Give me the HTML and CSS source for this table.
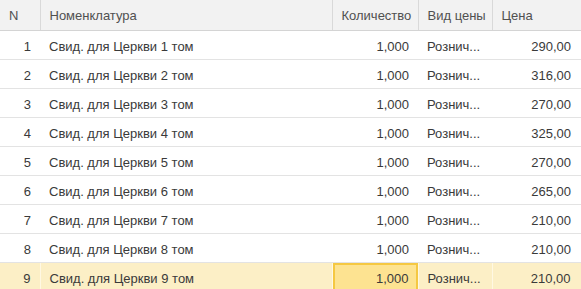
FILE: index.html
```html
<!DOCTYPE html>
<html lang="ru">
<head>
<meta charset="utf-8">
<link rel="stylesheet" href="styles.css">
</head>
<body>
<table class="grid">
  <colgroup>
    <col class="c-n"><col class="c-name"><col class="c-qty"><col class="c-kind"><col class="c-price">
  </colgroup>
  <thead>
    <tr><th>N</th><th>Номенклатура</th><th>Количество</th><th>Вид цены</th><th>Цена</th></tr>
  </thead>
  <tbody>
    <tr><td class="num">1</td><td>Свид. для Церкви 1 том</td><td class="num">1,000</td><td>Рознич...</td><td class="num">290,00</td></tr>
    <tr><td class="num">2</td><td>Свид. для Церкви 2 том</td><td class="num">1,000</td><td>Рознич...</td><td class="num">316,00</td></tr>
    <tr><td class="num">3</td><td>Свид. для Церкви 3 том</td><td class="num">1,000</td><td>Рознич...</td><td class="num">270,00</td></tr>
    <tr><td class="num">4</td><td>Свид. для Церкви 4 том</td><td class="num">1,000</td><td>Рознич...</td><td class="num">325,00</td></tr>
    <tr><td class="num">5</td><td>Свид. для Церкви 5 том</td><td class="num">1,000</td><td>Рознич...</td><td class="num">270,00</td></tr>
    <tr><td class="num">6</td><td>Свид. для Церкви 6 том</td><td class="num">1,000</td><td>Рознич...</td><td class="num">265,00</td></tr>
    <tr><td class="num">7</td><td>Свид. для Церкви 7 том</td><td class="num">1,000</td><td>Рознич...</td><td class="num">210,00</td></tr>
    <tr><td class="num">8</td><td>Свид. для Церкви 8 том</td><td class="num">1,000</td><td>Рознич...</td><td class="num">210,00</td></tr>
    <tr class="selected"><td class="num">9</td><td>Свид. для Церкви 9 том</td><td class="num current">1,000</td><td>Рознич...</td><td class="num">210,00</td></tr>
  </tbody>
</table>
</body>
</html>
```
FILE: styles.css
```css
html, body {
  margin: 0;
  padding: 0;
  background: #ffffff;
}
body {
  font-family: "Liberation Sans", Arial, sans-serif;
  font-size: 13px;
  color: #3a3a3a;
  overflow: hidden;
}
.grid {
  border-collapse: collapse;
  table-layout: fixed;
  width: 581px;
}
.c-n { width: 40px; }
.c-name { width: 292px; }
.c-qty { width: 86px; }
.c-kind { width: 74px; }
.c-price { width: 89px; }

.grid th {
  height: 30px;
  padding: 1px 8px 0 9px;
  box-sizing: border-box;
  background: #f2f2f2;
  color: #505050;
  font-weight: normal;
  text-align: left;
  border-right: 1px solid #d9d9d9;
  border-bottom: 1px solid #d4d4d4;
  white-space: nowrap;
  overflow: hidden;
}
.grid td {
  height: 29px;
  padding: 3px 9px 0 9px;
  box-sizing: border-box;
  border-bottom: 1px solid #e3e3e3;
  white-space: nowrap;
  overflow: hidden;
}
.grid td.num {
  text-align: right;
}
.grid td:last-child {
  padding-right: 10px;
}
.selected td {
  background: #fcefc6;
  border-right: 1px solid #fff8e3;
}
.selected td.current {
  background: #fde391;
  box-shadow: inset 0 0 0 2px #f5c842;
  border-top: 1px solid #ffffff;
}
```
